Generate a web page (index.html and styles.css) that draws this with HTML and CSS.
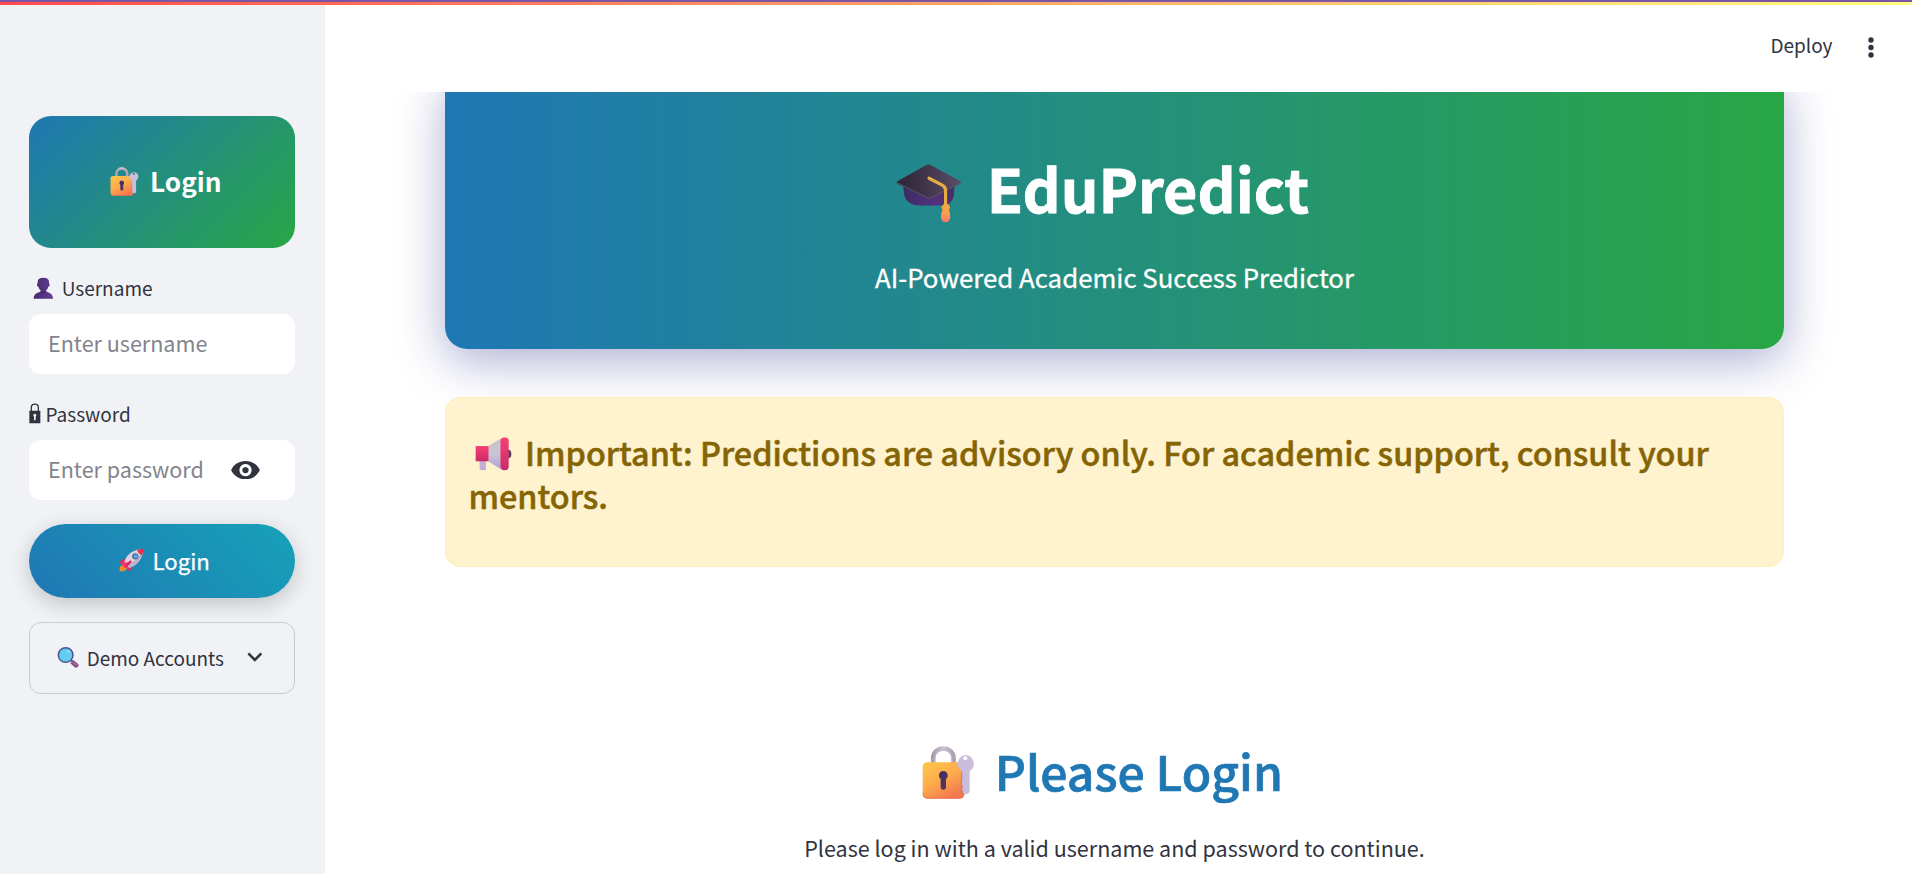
FILE: index.html
```html
<!DOCTYPE html>
<html lang="en">
<head>
<meta charset="utf-8">
<title>EduPredict</title>
<link rel="stylesheet" href="styles.css">
</head>
<body>
<svg class="defs" aria-hidden="true">
  <defs>
    <linearGradient id="gold" x1="0" y1="0" x2=".6" y2="1"><stop offset="0" stop-color="#fdc84b"/><stop offset=".55" stop-color="#fdaa4d"/><stop offset="1" stop-color="#f4784f"/></linearGradient>
    <linearGradient id="steel" x1="0" y1="0" x2="1" y2="0"><stop offset="0" stop-color="#a79fa9"/><stop offset=".5" stop-color="#c9c2cc"/><stop offset="1" stop-color="#aaa3ad"/></linearGradient>
    <linearGradient id="hole" x1="0" y1="0" x2="1" y2="1"><stop offset="0" stop-color="#3b2b63"/><stop offset="1" stop-color="#5b3a5c"/></linearGradient>
    <linearGradient id="board" x1="0" y1="0" x2="1" y2="0"><stop offset="0" stop-color="#2b2433"/><stop offset="1" stop-color="#5a4c68"/></linearGradient>
    <linearGradient id="cap" x1="0" y1="0" x2="1" y2="0"><stop offset="0" stop-color="#3c2a63"/><stop offset=".6" stop-color="#54317d"/><stop offset="1" stop-color="#453063"/></linearGradient>
    <linearGradient id="tassel" x1="0" y1="0" x2="0" y2="1"><stop offset="0" stop-color="#f5a83f"/><stop offset=".5" stop-color="#fba04f"/><stop offset="1" stop-color="#ff7468"/></linearGradient>
    <linearGradient id="pink" x1="0" y1="0" x2="0" y2="1"><stop offset="0" stop-color="#f83f72"/><stop offset="1" stop-color="#c92b6b"/></linearGradient>
    <linearGradient id="cone" x1="0" y1="0" x2="0" y2="1"><stop offset="0" stop-color="#c6c2c8"/><stop offset=".5" stop-color="#cbc5d6"/><stop offset="1" stop-color="#b3a1d3"/></linearGradient>
    <linearGradient id="person" x1="0" y1="0" x2="1" y2="0"><stop offset="0" stop-color="#472a6d"/><stop offset="1" stop-color="#613e96"/></linearGradient>
    <symbol id="lock-key" viewBox="35 33 158 160">
      <path d="M68 88V69a31 29 0 0 1 62 0v19" fill="none" stroke="url(#steel)" stroke-width="13"/>
      <path d="M74 88V69a25 23 0 0 1 50 0v19" fill="none" stroke="#c6b2d6" stroke-width="3"/>
      <rect x="37" y="82" width="125" height="109" rx="13" fill="url(#gold)"/>
      <path d="M39 172v6q0 11 11 11h99q11 0 11-11v-5" fill="none" stroke="#dc6a54" stroke-width="3" opacity=".6"/>
      <path d="M99 108a13.500 13.500 0 0 1 8 24v24a8 8 0 0 1-16 0v-24a13.500 13.500 0 0 1 8-24z" fill="url(#hole)"/>
      <path d="M165 60a26 26 0 0 1 13 48v61q-1 8-9 9h-5q-8-2-8-10l-2-7 4-6-4-6 1-7V108a26 26 0 0 1 10-48zM165 64a6 6 0 1 0 .1 0z" fill="#cabddb" fill-rule="evenodd"/>
      <path d="M154 111v28l-2 7 3 5-3 8 4 9q0 6 4 8" fill="none" stroke="#b37c83" stroke-width="2.500"/>
    </symbol>
  </defs>
</svg>

<div class="topline"></div>
<div class="app">
  <aside class="sidebar">
    <div class="login-card">
      <svg class="ic-lock-small"><use href="#lock-key"/></svg>
      <h2 class="card-title">Login</h2>
    </div>

    <label class="label label-user">
      <svg class="ic-person" viewBox="99 562 62 66">
        <path d="M130 564c11 0 17 4 17 12v5q3 1 2 6-1 4-4 4-2 8-7 11v4c10 2 21 6 21 21h-58c0-15 11-19 21-21v-4q-5-3-7-11-3 0-4-4-1-5 2-6v-5c0-8 6-12 17-12z" fill="url(#person)"/>
        <path d="M120 603q10 7 20 0l-2 5q-8 4-16 0z" fill="#3d225e"/>
      </svg>
      <span>Username</span>
    </label>
    <div class="field"><span class="placeholder">Enter username</span></div>

    <label class="label label-pass">
      <svg class="ic-pad" viewBox="89 70 36 63">
        <path d="M96 95V83q0-9.500 10.500-9.500T117 83v12" fill="none" stroke="#31333f" stroke-width="4"/>
        <rect x="90" y="93" width="33" height="38" rx="2" fill="#31333f"/>
        <path d="M106.500 102a5 5 0 0 1 2.500 9v11h-5v-11a5 5 0 0 1 2.500-9z" fill="#f0f2f6"/>
      </svg>
      <span>Password</span>
    </label>
    <div class="field">
      <span class="placeholder">Enter password</span>
      <svg class="ic-eye" viewBox="694 243 87 56"><path d="M737.500 243c20 0 36 11 43.500 27.500-7.500 16.500-23.500 28-43.500 28s-36-11.500-43.500-28C701.500 254 717.500 243 737.500 243zm0 9a18.500 18.500 0 1 0 .1 0zm0 9a9.500 9.500 0 1 1-.1 0z" fill="#31333f" fill-rule="evenodd"/></svg>
    </div>

    <button class="login-btn" type="button">
      <svg class="ic-rocket" viewBox="357 505 75 73">
        <path d="M368 555q-7 2-8 7-2 7-1 13 7 1 13-1 6-2 9-9z" fill="#f38a26"/>
        <path d="M381 538q-15-2-23 11l18 6zM397 553q3 14-9 23l-8-17z" fill="#e82a62"/>
        <path d="M372 549q8-25 28-34 14-7 29-7 1 15-7 29-10 19-34 28z" fill="#dcd3df"/>
        <path d="M388 565q24-9 34-28 8-14 7-26-14 32-49 45z" fill="#bdb2cc"/>
        <path d="M411 511q9-4 19-3 0 9-4 19-11-4-15-16z" fill="#e72c4c"/>
        <circle cx="406" cy="530" r="9.500" fill="#51658f"/><circle cx="407" cy="530" r="6" fill="#58a4ee"/>
        <path d="M369 546l-4 10 11 9 9 1-3-10 4-7z" fill="#f8386c"/>
        <path d="M393 542q-11 5-18 20 15-6 20-16z" fill="#d92463"/>
      </svg>
      <span>Login</span>
    </button>

    <div class="expander">
      <svg class="ic-glass" viewBox="172 795 67 69">
        <path d="M216 842l5-5 14 11q4 4 0 9-5 5-10 2l-13-12z" fill="#8b4f8d"/>
        <path d="M216 842l3-3 14 11-2 4z" fill="#a56a9f"/>
        <path d="M211 835l8 7" stroke="#514683" stroke-width="5"/>
        <circle cx="198" cy="822" r="22" fill="#62cdef" stroke="#4c5496" stroke-width="4.500"/>
        <circle cx="207" cy="812" r="4" fill="#9adcf4"/>
      </svg>
      <span class="expander-title">Demo Accounts</span>
      <svg class="ic-chev" viewBox="742 814 46 31"><path d="M746 818l19.500 20L785 818" fill="none" stroke="#31333f" stroke-width="7.500"/></svg>
    </div>
  </aside>

  <div class="page">
    <header class="toolbar">
      <span class="deploy">Deploy</span>
      <svg class="ic-dots" viewBox="0 0 6 21"><circle cx="3" cy="3" r="2.700"/><circle cx="3" cy="10.500" r="2.700"/><circle cx="3" cy="18" r="2.700"/></svg>
    </header>
    <main class="content">
      <section class="hero">
        <div class="hero-title">
          <svg class="ic-cap" viewBox="17 28 198 178">
            <path d="M37 88l5 37q10 28 45 28h65q34 0 39-30l3-38z" fill="url(#cap)"/>
            <path d="M108 31q6-3 13 0l88 48q7 4 0 9l-84 42q-9 5-17 0L22 88q-7-5 0-9z" fill="url(#board)"/>
            <path d="M20 85l89 44q7 4 15 0l87-45" fill="none" stroke="#63586c" stroke-width="4" opacity=".7"/>
            <path d="M116 71l40 21q10 5 10 17v44" fill="none" stroke="#e7ad45" stroke-width="9.500" stroke-linecap="round"/>
            <path d="M159 150q7-4 16 0l5 9-4 7q5 12 4 25-4 13-14 13t-14-13q-1-13 5-25l-4-7z" fill="url(#tassel)"/>
          </svg>
          <h1>EduPredict</h1>
        </div>
        <p class="tagline">AI-Powered Academic Success Predictor</p>
      </section>

      <section class="notice">
        <p><svg class="ic-horn" viewBox="28 35 112 102">
          <path d="M42 107h19v28H42z" fill="#c2b0d9"/>
          <ellipse cx="129" cy="86" rx="9" ry="13" fill="#4e4560"/>
          <path d="M68 62l38-23v93l-38-24z" fill="url(#cone)"/>
          <path d="M30 62h39v46H30z" fill="url(#pink)"/>
          <rect x="105" y="36" width="25" height="99" rx="11" fill="url(#pink)"/>
        </svg>Important: Predictions are advisory only. For academic support, consult your mentors.</p>
      </section>

      <section class="prompt">
        <div class="prompt-title">
          <svg class="ic-lock-big"><use href="#lock-key"/></svg>
          <h2>Please Login</h2>
        </div>
        <p class="prompt-text">Please log in with a valid username and password to continue.</p>
      </section>
    </main>
  </div>
</div>
</body>
</html>
```
FILE: styles.css
```css
* { box-sizing: border-box; }
body {
  margin: 0;
  height: 874px;
  overflow: hidden;
  background: #fff;
  color: #31333f;
  font-family: "Noto Sans CJK SC", "Noto Sans", sans-serif;
}
h1, h2, p { margin: 0; }
svg { display: block; flex: none; }
.defs { position: absolute; width: 0; height: 0; }

.topline {
  height: 5px;
  border-top: 2px solid #7a55a6;
  background: linear-gradient(90deg, #ff4b4b, #fffd80);
}
.app { display: flex; height: 869px; }

/* Sidebar */
.sidebar {
  width: 325px;
  flex: none;
  padding: 111px 30px 0 29px;
  background: #f0f2f6;
}
.login-card {
  display: flex;
  height: 132px;
  padding: 51px 0 0 80.500px;
  border-radius: 22px;
  background: linear-gradient(135deg, #1f77b4, #28a745);
  color: #fff;
}
.ic-lock-small { width: 29px; height: 29px; }
.card-title { margin: -6px 0 0 11.500px; font-size: 26.200px; line-height: 40px; font-weight: 700; }

.label { display: flex; height: 28px; font-size: 19px; line-height: 28px; }
.label-user { margin-top: 26px; padding-left: 4px; }
.ic-person { width: 20.700px; height: 22px; margin-top: 3px; }
.label-user span { margin-left: 8px; }
.label-pass { margin-top: 26px; }
.ic-pad { width: 12px; height: 21px; margin-top: 3px; }
.label-pass span { margin-left: 4.500px; }

.field {
  display: flex;
  align-items: center;
  height: 60px;
  margin-top: 12px;
  padding-left: 18px;
  border-radius: 12px;
  background: #fff;
}
.placeholder { width: 184px; margin-top: -3px; padding-left: 1px; font-size: 21.550px; line-height: 34px; color: #83848c; }
.ic-eye { width: 29px; height: 18.500px; }

.login-btn {
  display: flex;
  width: 266px;
  height: 74px;
  margin-top: 24px;
  padding: 24px 0 0 90px;
  border: 0;
  border-radius: 37px;
  background: linear-gradient(45deg, #1f77b4, #17a2b8);
  box-shadow: 0 6px 22px rgba(0, 0, 0, .2);
  color: #fff;
  font: 400 22.200px/32px "Noto Sans CJK SC", "Noto Sans", sans-serif;
  -webkit-text-stroke: .25px;
}
.ic-rocket { width: 25px; height: 24.300px; }
.login-btn span { margin: -4px 0 0 8.500px; }

.expander {
  display: flex;
  height: 72px;
  margin-top: 24px;
  padding: 23px 0 0 27px;
  border: 1px solid #c9cbd0;
  border-radius: 12px;
}
.ic-glass { width: 22.300px; height: 23px; }
.expander-title { width: 160px; margin: -2px 0 0 7.500px; font-size: 18.950px; line-height: 28px; }
.ic-chev { width: 15.300px; height: 10.300px; margin-top: 6px; }

/* Main column */
.page { flex: 1; }
.toolbar {
  display: flex;
  justify-content: flex-end;
  height: 87px;
  padding: 26px 38px 0 0;
}
.deploy { font-size: 19px; line-height: 28px; }
.ic-dots { width: 6px; height: 21px; margin: 5.500px 0 0 35.500px; fill: #31333f; }
.content {
  height: 782px;
  padding: 0 128px 0 120px;
  overflow: hidden;
}
.hero {
  height: 277px;
  margin-top: -20px;
  padding-top: 80px;
  border-radius: 22px;
  background: linear-gradient(90deg, #1f77b4, #28a745);
  box-shadow: 0 12px 48px rgba(31, 38, 135, .37);
  color: #fff;
}
.hero-title { display: flex; justify-content: center; padding-right: 24px; }
.ic-cap { width: 66px; height: 59px; margin-top: 12px; }
.hero-title h1 { margin-left: 25px; font-size: 59.300px; line-height: 71px; font-weight: 700; -webkit-text-stroke: .8px; }
.tagline { margin-top: 35px; font-size: 25.800px; line-height: 38px; text-align: center; -webkit-text-stroke: .3px; }

.notice {
  position: relative;
  height: 170px;
  margin-top: 48px;
  padding: 32px 23px 0 22.500px;
  border: 1px solid #ffeeba;
  border-radius: 15px;
  background: #fff2ce;
  color: #856404;
  font-size: 32.370px;
  line-height: 43.200px;
  font-weight: 500;
  -webkit-text-stroke: .5px;
}
.ic-horn { display: inline-block; width: 37px; height: 34px; margin: 0 13px 0 6.500px; vertical-align: -5px; }

.prompt { margin-top: 168px; }
.prompt-title { display: flex; justify-content: center; padding-right: 24px; color: #1f77b4; }
.ic-lock-big { width: 52.700px; height: 53.300px; margin-top: 11px; }
.prompt-title h2 { margin-left: 20px; font-size: 48.100px; line-height: 70px; font-weight: 500; -webkit-text-stroke: .7px; }
.prompt-text { margin-top: 26px; font-size: 21.540px; line-height: 34px; text-align: center; }
```
